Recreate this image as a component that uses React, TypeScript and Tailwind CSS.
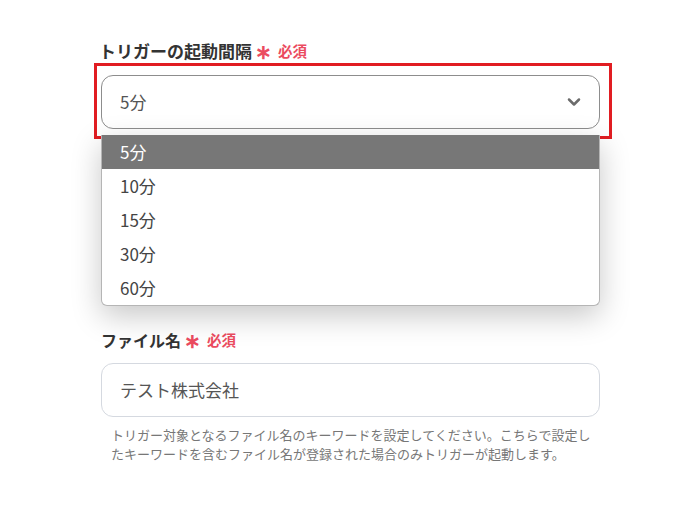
import { ChevronDown } from "lucide-react";

const intervals = ["5分", "10分", "15分", "30分", "60分"];

function RequiredMark() {
  return (
    <span className="ml-[3px] inline-flex items-center text-[14.5px] font-bold text-[#eb4b5f]">
      <span className="mr-[6px] text-[20px] leading-none">∗</span>
      必須
    </span>
  );
}

export default function App() {
  return (
    <div
      className="min-h-[513px] bg-white text-[#333]"
      style={{ fontFamily: '"Noto Sans CJK JP", "Noto Sans", sans-serif' }}
    >
      <div className="ml-[101px] w-[499px] pt-[39px]">
        <div className="-ml-[2px] flex h-6 items-center text-[17px] font-bold">
          トリガーの起動間隔
          <RequiredMark />
        </div>

        <div className="relative mt-3">
          <div className="flex h-[54px] items-center justify-between rounded-[12px] border border-[#8d8d8d] bg-white pl-[18px] pr-[15px] text-[17px] text-[#555]">
            <span>5分</span>
            <ChevronDown className="h-5 w-5 text-[#6b6b6b]" strokeWidth={3} />
          </div>
          <div className="pointer-events-none absolute -bottom-[10px] -left-[7px] -right-[12px] -top-[12px] border-[3px] border-[#e11d22]" />

          <ul className="absolute left-0 right-0 top-[60px] z-10 overflow-hidden rounded-b-[6px] border border-t-0 border-[#b5b5b5] bg-white text-[17px] shadow-[0_10px_30px_rgba(0,0,0,0.22)]">
            {intervals.map((item, i) => (
              <li
                key={item}
                className={`flex h-[34px] items-center pl-[18px] ${
                  i === 0 ? "bg-[#777777] text-white" : "text-[#444]"
                }`}
              >
                {item}
              </li>
            ))}
          </ul>
        </div>

        <div className="mt-[199px] flex h-6 items-center text-[16px] font-bold">
          ファイル名
          <RequiredMark />
        </div>

        <div className="mt-[11px] flex h-[54px] items-center rounded-[12px] border border-[#d5d9e0] bg-white pl-[18px] text-[17px] text-[#555]">
          テスト株式会社
        </div>

        <p className="mt-[8px] pl-[10px] pr-[4px] text-[13px] leading-[19px] text-[#777]">
          トリガー対象となるファイル名のキーワードを設定してください。こちらで設定したキーワードを含むファイル名が登録された場合のみトリガーが起動します。
        </p>
      </div>
    </div>
  );
}
